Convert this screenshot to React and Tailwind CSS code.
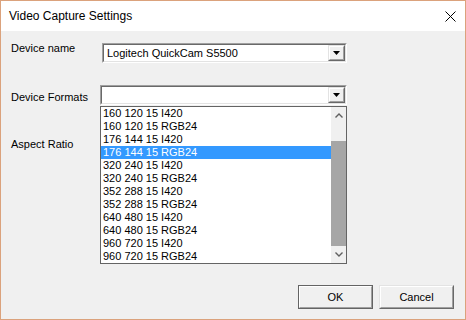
import React from "react";

const items = [
  "160 120 15 I420",
  "160 120 15 RGB24",
  "176 144 15 I420",
  "176 144 15 RGB24",
  "320 240 15 I420",
  "320 240 15 RGB24",
  "352 288 15 I420",
  "352 288 15 RGB24",
  "640 480 15 I420",
  "640 480 15 RGB24",
  "960 720 15 I420",
  "960 720 15 RGB24",
];

function DropButton() {
  return (
    <div className="w-[17px] h-full border border-t-[#e3e3e3] border-l-[#e3e3e3] border-b-[#696969] border-r-[#696969]">
      <div className="w-full h-full border border-t-white border-l-white border-b-[#a0a0a0] border-r-[#a0a0a0] bg-[#f0f0f0] flex items-center justify-center">
        <svg width="7" height="4" viewBox="0 0 7 4">
          <path d="M0 0 H7 L3.5 4 Z" fill="#000" />
        </svg>
      </div>
    </div>
  );
}

function Combo({ width, text }) {
  return (
    <div
      className={`h-[20px] border border-t-[#a0a0a0] border-l-[#a0a0a0] border-b-white border-r-white ${width}`}
    >
      <div className="h-full border border-t-[#696969] border-l-[#696969] border-b-[#e3e3e3] border-r-[#e3e3e3] bg-white flex items-stretch">
        <div className="flex-1 pl-[3px] leading-[16px]">{text}</div>
        <DropButton />
      </div>
    </div>
  );
}

function Chevron({ up }) {
  return (
    <svg width="8" height="5" viewBox="0 0 8 5">
      <path
        d={up ? "M0.5 4.5 L4 1 L7.5 4.5" : "M0.5 0.5 L4 4 L7.5 0.5"}
        fill="none"
        stroke="#606060"
        strokeWidth="1.4"
      />
    </svg>
  );
}

export default function App() {
  return (
    <div className="w-[466px] h-[320px] border border-[#dba27c] bg-[#f0f0f0] flex flex-col font-['Liberation_Sans',Arial,sans-serif] text-[11px] text-black">
      <div className="h-[30px] shrink-0 bg-white flex items-center justify-between pl-[8px] pr-[9px] text-[12px]">
        <span>Video Capture Settings</span>
        <svg width="11" height="11" viewBox="0 0 11 11">
          <path d="M0.5 0.5 L10.5 10.5 M10.5 0.5 L0.5 10.5" stroke="#000" strokeWidth="1" />
        </svg>
      </div>
      <div className="relative flex-1 flex flex-col pl-[10px] pr-[11px]">
        <div className="mt-[12px] flex">
          <div className="w-[91px] leading-[13px] -mt-px">Device name</div>
          <Combo width="w-[245px]" text="Logitech QuickCam S5500" />
        </div>
        <div className="mt-[22px] flex">
          <div className="w-[89px] leading-[13px] pt-[6px]">Device Formats</div>
          <Combo width="w-[247px]" text="" />
        </div>
        <div className="mt-[33px] leading-[13px]">Aspect Ratio</div>

        <div className="absolute left-[99px] top-[75px] w-[247px] h-[158px] border border-[#646464] bg-white flex">
          <div className="flex-1 flex flex-col">
            {items.map((it, i) => (
              <div
                key={i}
                className={`h-[13px] leading-[13px] pl-[2px] whitespace-pre ${
                  i === 3 ? "bg-[#3399ff] text-white" : ""
                }`}
              >
                {it}
              </div>
            ))}
          </div>
          <div className="w-[15px] bg-[#f0f0f0] flex flex-col">
            <div className="h-[17px] flex items-center justify-center">
              <Chevron up />
            </div>
            <div className="h-[17px]" />
            <div className="h-[105px] bg-[#a6a6a6]" />
            <div className="h-[17px] flex items-center justify-center">
              <Chevron />
            </div>
          </div>
        </div>

        <div className="mt-auto pb-[10px] flex justify-end gap-[6px]">
          <button className="w-[75px] h-[24px] border border-[#646464] bg-[#f0f0f0]">
            <div className="w-full h-full border border-t-white border-l-white border-b-[#a0a0a0] border-r-[#a0a0a0] flex items-center justify-center leading-none">
              OK
            </div>
          </button>
          <button className="w-[75px] h-[24px] border border-t-[#e3e3e3] border-l-[#e3e3e3] border-b-[#696969] border-r-[#696969] bg-[#f0f0f0]">
            <div className="w-full h-full border border-t-white border-l-white border-b-[#a0a0a0] border-r-[#a0a0a0] flex items-center justify-center leading-none">
              Cancel
            </div>
          </button>
        </div>
      </div>
    </div>
  );
}
